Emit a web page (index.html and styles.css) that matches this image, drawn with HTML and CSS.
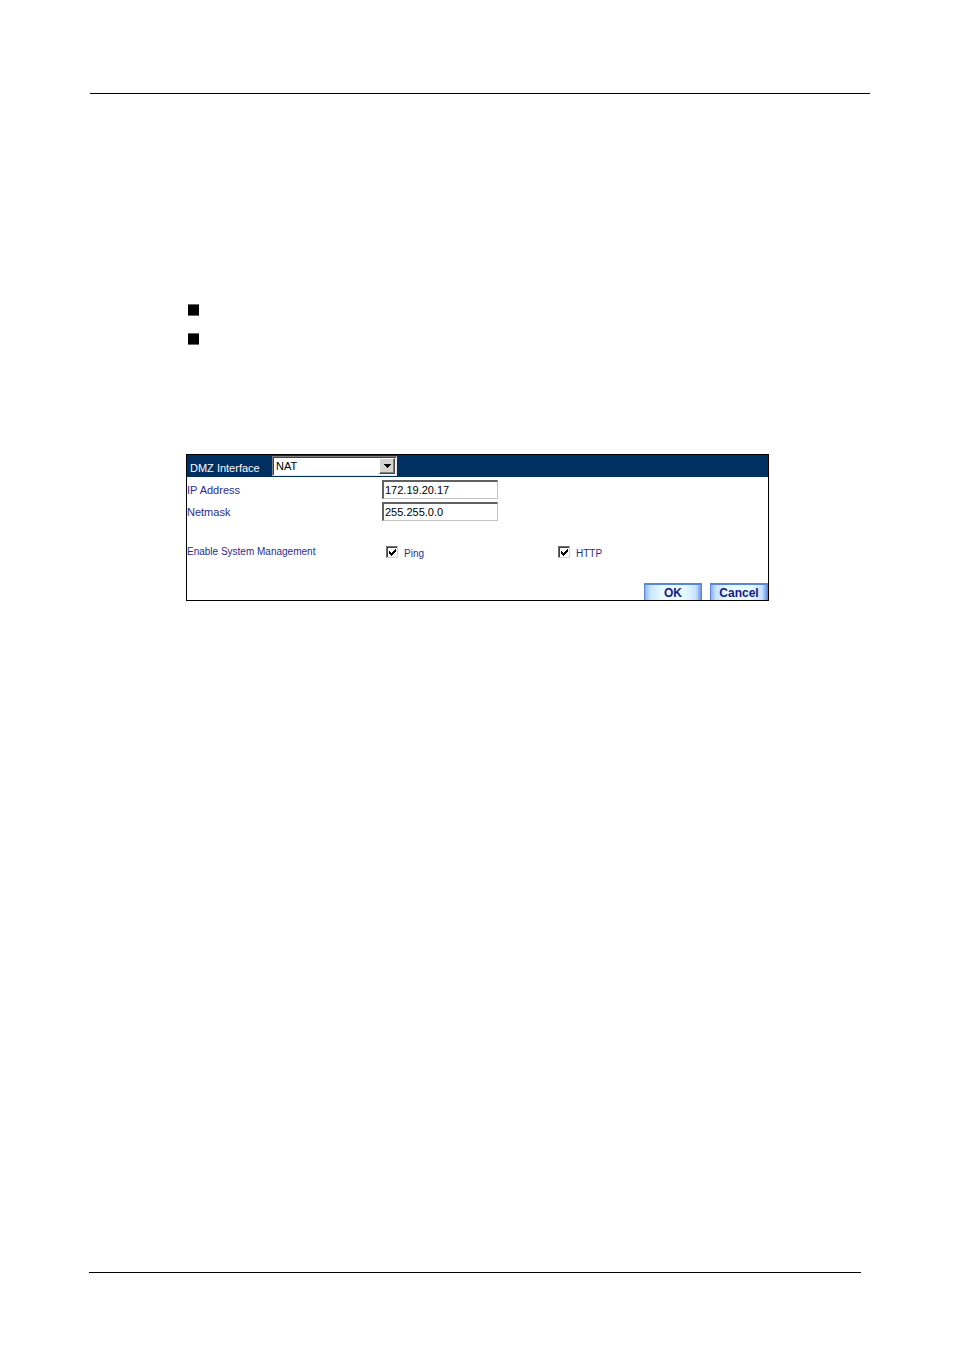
FILE: index.html
```html
<!DOCTYPE html>
<html lang="en">
<head>
<meta charset="utf-8">
<title>DMZ Interface</title>
<link rel="stylesheet" href="styles.css">
</head>
<body>
<div class="page">
  <hr class="rule rule-top">
  <main class="content">
    <ul class="bullets">
      <li></li>
      <li></li>
    </ul>
    <form class="panel">
      <div class="panel-head">
        <label for="mode">DMZ Interface</label>
        <span class="select-box">
          <select id="mode"><option>NAT</option></select>
          <span class="arrow"><svg viewBox="0 0 7 4" width="7" height="4" shape-rendering="crispEdges"><path d="M0 0h7v1H6v1H5v1H4v1H3V3H2V2H1V1H0z"/></svg></span>
        </span>
      </div>
      <div class="row">
        <label class="name" for="ip">IP Address</label>
        <input class="text" id="ip" type="text" value="172.19.20.17">
      </div>
      <div class="row">
        <label class="name" for="mask">Netmask</label>
        <input class="text" id="mask" type="text" value="255.255.0.0">
      </div>
      <div class="row row-manage">
        <span class="name">Enable System Management</span>
        <span class="checks">
          <span class="check"><input id="ping" type="checkbox" checked><label for="ping">Ping</label></span>
          <span class="check"><input id="http" type="checkbox" checked><label for="http">HTTP</label></span>
        </span>
      </div>
      <div class="actions">
        <button type="button">OK</button>
        <button type="button">Cancel</button>
      </div>
    </form>
  </main>
  <hr class="rule rule-bottom">
</div>
</body>
</html>
```
FILE: styles.css
```css
* { box-sizing: border-box; }

body {
  margin: 0;
  background: #fff;
  font: 11px/14px "Liberation Sans", Arial, sans-serif;
  color: #2b2b90;
}

.page {
  min-height: 100vh;
  display: flex;
  flex-direction: column;
  padding: 93px 84px 78px 90px;
}

.rule {
  width: 100%;
  height: 1px;
  margin: 0;
  border: 0;
  background: #000;
}

.rule-bottom {
  width: auto;
  margin: auto 9px 0 -1px;
}

.content { padding: 210px 101px 0 96px; }

.bullets {
  list-style: none;
  margin: 0 0 109px 2px;
  padding: 0;
  display: grid;
  gap: 17px;
}

.bullets li {
  width: 11px;
  height: 12px;
  background: #000;
  border: solid #666;
  border-width: 1px 0;
}

.panel {
  border: 1px solid #000;
  background: #fff;
}

.panel-head {
  display: flex;
  height: 22px;
  padding: 1px 0 0 3px;
  background: #003062;
  color: #fff;
}

.panel-head label {
  width: 82px;
  padding-top: 5px;
}

.select-box {
  position: relative;
  width: 125px;
  height: 20px;
}

select {
  appearance: none;
  width: 100%;
  height: 100%;
  margin: 0;
  padding: 0 18px 0 3px;
  border: 1px solid;
  border-color: #808080 #e7e3de #e7e3de #808080;
  border-radius: 0;
  box-shadow: inset 1px 1px #404040;
  background: #fff;
  font: inherit;
  color: #000;
}

.arrow {
  position: absolute;
  top: 2px;
  right: 2px;
  bottom: 2px;
  width: 16px;
  display: grid;
  place-items: center;
  background: #d6d3ce;
  border: 1px solid;
  border-color: #fff #404040 #404040 #fff;
  box-shadow: inset -1px -1px #808080;
  pointer-events: none;
}

.row {
  display: flex;
  padding-top: 3px;
}

.name {
  width: 195px;
  padding-top: 3px;
}

.text {
  width: 116px;
  height: 19px;
  margin: 0;
  padding: 0 0 0 1px;
  border: solid;
  border-width: 2px 1px 1px 2px;
  border-color: #606060 #c6c3c6 #c6c3c6 #606060;
  border-radius: 0;
  font: inherit;
  color: #000;
}

.row-manage {
  padding-top: 24px;
  font-size: 10px;
}

.row-manage .name { padding-top: 0; }

.checks {
  display: grid;
  grid-template-columns: 172px auto;
  padding-left: 4px;
}

.check {
  display: flex;
  gap: 6px;
}

.check label { padding-top: 2px; }

.check input {
  appearance: none;
  width: 12px;
  height: 12px;
  margin: 1px 0 0;
  border: 1px solid;
  border-color: #707070 #d6d3ce #d6d3ce #707070;
  box-shadow: inset 1px 1px #404040;
  background: #fff;
}

.check input:checked {
  background: #fff url("data:image/svg+xml,%3Csvg xmlns='http://www.w3.org/2000/svg' width='7' height='7' shape-rendering='crispEdges'%3E%3Cpath d='M0 2h1v1h1v1h1V3h1V2h1V1h1V0h1v3H6v1H5v1H4v1H3v1H2V6H1V5H0z'/%3E%3C/svg%3E") 2px 2px no-repeat;
}

.actions {
  display: flex;
  justify-content: flex-end;
  gap: 8px;
  padding-top: 22px;
}

button {
  width: 58px;
  height: 17px;
  margin: 0;
  padding: 1px 0 0;
  border: solid #5a86d6;
  border-width: 2px 1px 0;
  border-radius: 1px 1px 0 0;
  background: linear-gradient(90deg, #8cb2ef, #c6e3ff 5px, #e7fbff 30%, #e7fbff 70%, #c6e3ff calc(100% - 5px), #6b92e7);
  font: bold 12px/14px "Liberation Sans", Arial, sans-serif;
  color: #181884;
}
```
